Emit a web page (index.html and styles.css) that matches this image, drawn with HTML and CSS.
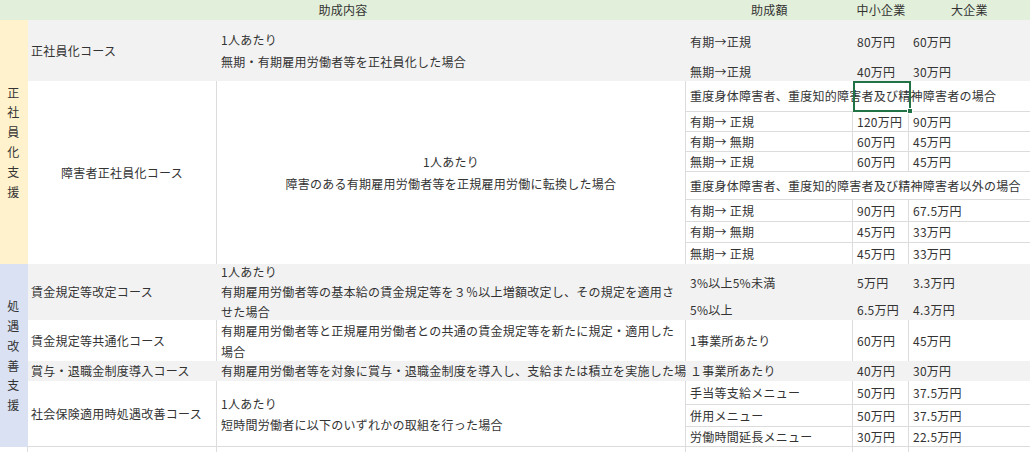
FILE: index.html
```html
<!DOCTYPE html>
<html lang="ja">
<head>
<meta charset="utf-8">
<title>助成内容</title>
<link rel="stylesheet" href="styles.css">
</head>
<body>
<div class="sheet">
  <div class="c hd cs3">助成内容</div>
  <div class="c hd">助成額</div>
  <div class="c hd">中小企業</div>
  <div class="c hd">大企業</div>

  <div class="c grp y rs10"><div>正<br>社<br>員<br>化<br>支<br>援</div></div>
  <div class="c g rs2 p3">正社員化コース</div>
  <div class="c g rs2"><div class="lh22">1人あたり<br>無期・有期雇用労働者等を正社員化した場合</div></div>
  <div class="c g end">有期→正規</div>
  <div class="c g end">80万円</div>
  <div class="c g end">60万円</div>
  <div class="c g end">無期→正規</div>
  <div class="c g end">40万円</div>
  <div class="c g end">30万円</div>

  <div class="c w rs8 br ctr">障害者正社員化コース</div>
  <div class="c w rs8 br ctr"><div class="lh22">1人あたり<br>障害のある有期雇用労働者等を正規雇用労働に転換した場合</div></div>
  <div class="c w cs3 bb rel">重度身体障害者、重度知的障害者及び精神障害者の場合<span class="sel"><span class="handle"></span></span></div>
  <div class="c w br bb">有期→ 正規</div>
  <div class="c w br bb">120万円</div>
  <div class="c w bb">90万円</div>
  <div class="c w br bb">有期→ 無期</div>
  <div class="c w br bb">60万円</div>
  <div class="c w bb">45万円</div>
  <div class="c w br bb">無期→ 正規</div>
  <div class="c w br bb">60万円</div>
  <div class="c w bb">45万円</div>
  <div class="c w cs3 bb">重度身体障害者、重度知的障害者及び精神障害者以外の場合</div>
  <div class="c w br bb">有期→ 正規</div>
  <div class="c w br bb">90万円</div>
  <div class="c w bb">67.5万円</div>
  <div class="c w br bb">有期→ 無期</div>
  <div class="c w br bb">45万円</div>
  <div class="c w bb">33万円</div>
  <div class="c w br">無期→ 正規</div>
  <div class="c w br">45万円</div>
  <div class="c w">33万円</div>

  <div class="c grp b rs7"><div>処<br>遇<br>改<br>善<br>支<br>援</div></div>
  <div class="c g rs2 p3">賃金規定等改定コース</div>
  <div class="c g rs2"><div class="lh20">1人あたり<br>有期雇用労働者等の基本給の賃金規定等を３％以上増額改定し、その規定を適用さ<br>せた場合</div></div>
  <div class="c g mid">3%以上5%未満</div>
  <div class="c g mid">5万円</div>
  <div class="c g mid">3.3万円</div>
  <div class="c g">5%以上</div>
  <div class="c g">6.5万円</div>
  <div class="c g">4.3万円</div>

  <div class="c w br p3">賃金規定等共通化コース</div>
  <div class="c w br"><div class="lh21">有期雇用労働者等と正規雇用労働者との共通の賃金規定等を新たに規定・適用した<br>場合</div></div>
  <div class="c w br">1事業所あたり</div>
  <div class="c w br">60万円</div>
  <div class="c w">45万円</div>

  <div class="c g p3">賞与・退職金制度導入コース</div>
  <div class="c g clip">有期雇用労働者等を対象に賞与・退職金制度を導入し、支給または積立を実施した場合</div>
  <div class="c g">１事業所あたり</div>
  <div class="c g">40万円</div>
  <div class="c g">30万円</div>

  <div class="c w rs3 br bb p3">社会保険適用時処遇改善コース</div>
  <div class="c w rs3 br bb"><div class="lh21">1人あたり<br>短時間労働者に以下のいずれかの取組を行った場合</div></div>
  <div class="c w br bb">手当等支給メニュー</div>
  <div class="c w br bb">50万円</div>
  <div class="c w bb">37.5万円</div>
  <div class="c w br bb">併用メニュー</div>
  <div class="c w br bb">50万円</div>
  <div class="c w bb">37.5万円</div>
  <div class="c w br bb">労働時間延長メニュー</div>
  <div class="c w br bb">30万円</div>
  <div class="c w bb">22.5万円</div>

  <div class="c w br"></div>
  <div class="c w br"></div>
  <div class="c w br"></div>
  <div class="c w br"></div>
  <div class="c w br"></div>
  <div class="c w"></div>
</div>
</body>
</html>
```

FILE: styles.css
```css
* {
  box-sizing: border-box;
  margin: 0;
  padding: 0;
}

html,
body {
  width: 1030px;
  height: 452px;
  overflow: hidden;
  background: #ffffff;
}

body {
  font-family: "Noto Sans CJK JP", "Noto Sans", sans-serif;
  font-size: 12px;
  color: #333333;
  letter-spacing: 0.25px;
}

.sheet {
  display: grid;
  grid-template-columns: 28px 189px 469px 167px 56px 121px;
  grid-template-rows: 20px 31px 30px 31px 20px 20px 20px 28px 22px 21px 21px 36px 20px 41px 20px 24px 22px 20px 20px;
}

.c {
  display: flex;
  align-items: center;
  padding-left: 4px;
  white-space: nowrap;
  line-height: 16px;
  min-width: 0;
}

.p3 {
  padding-left: 3px;
}

.hd {
  background: #e2efda;
  justify-content: center;
  padding-left: 0;
}

.g {
  background: #f2f2f2;
}

.w {
  background: #ffffff;
}

.y {
  background: #fff2cc;
}

.b {
  background: #d9e1f2;
}

.grp {
  justify-content: center;
  text-align: center;
  padding-left: 0;
  padding-right: 1px;
  line-height: 19.8px;
}

.cs3 {
  grid-column: span 3;
}

.rs2 {
  grid-row: span 2;
}

.rs3 {
  grid-row: span 3;
}

.rs7 {
  grid-row: span 7;
}

.rs8 {
  grid-row: span 8;
}

.rs10 {
  grid-row: span 10;
}

.ctr {
  justify-content: center;
  text-align: center;
  padding-left: 0;
}

.end {
  align-items: flex-end;
  padding-bottom: 1px;
}

.mid {
  padding-top: 1px;
}

.br {
  border-right: 1px solid #dcdcdc;
}

.bb {
  border-bottom: 1px solid #dcdcdc;
}

.clip {
  overflow: hidden;
}

.lh20 {
  line-height: 20px;
}

.lh21 {
  line-height: 21px;
}

.lh22 {
  line-height: 22px;
}

.rel {
  position: relative;
}

.sel {
  position: absolute;
  left: 167px;
  top: 0;
  width: 58px;
  height: 31px;
  border: 2px solid #217346;
}

.handle {
  position: absolute;
  right: -4px;
  bottom: -4px;
  width: 6px;
  height: 6px;
  background: #217346;
  border: 1px solid #ffffff;
}
```
